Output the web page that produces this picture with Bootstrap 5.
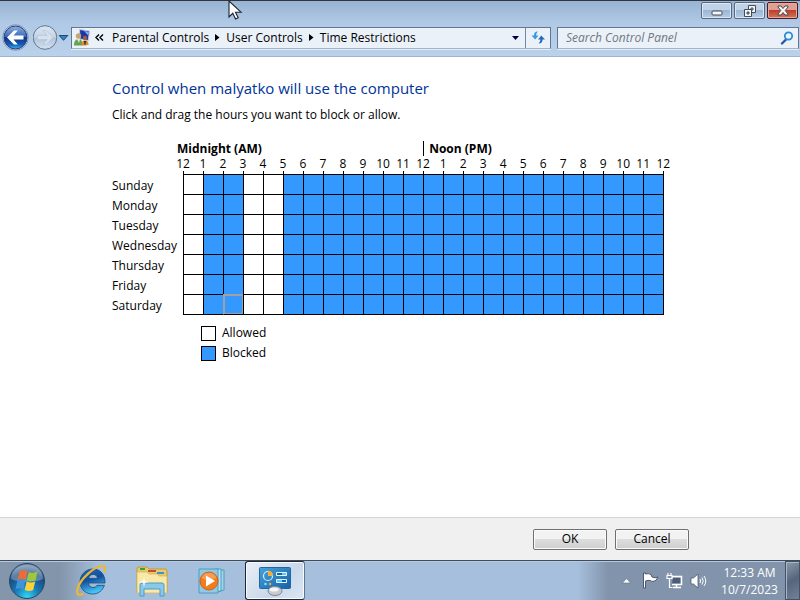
<!DOCTYPE html>
<html lang="en">
<head>
<meta charset="utf-8">
<meta name="viewport" content="width=device-width, initial-scale=1">
<title>Time Restrictions</title>
<link href="https://cdn.jsdelivr.net/npm/bootstrap@5.3.0/dist/css/bootstrap.min.css" rel="stylesheet">
<style>
  body { font-family: "Open Sans", "Noto Sans", sans-serif; font-size: 12px; line-height: 16px; color: #000; background: #fff; }
  button { font: inherit; color: inherit; }
  svg { display: block; flex: none; }

  .window-head { border-top: 1px solid #35353b; border-bottom: 1px solid #a0b5cc; background: linear-gradient(#98b3d3, #b0c9e6 40%, #b9d1ea); height: 57px; }
  .caption { height: 23px; padding: 1px 2px 0 0; gap: 2px; }
  .caption-btn { width: 31px; height: 17px; padding: 0; border: 1px solid #56687f; border-radius: 2px; box-shadow: inset 0 0 0 1px #dbe7f4; background: linear-gradient(#bfd2e7 45%, #9db7d3 50%, #b5cce5); }
  .caption-close { border-color: #4b1a20; box-shadow: inset 0 0 0 1px #e6a99e; background: linear-gradient(#dfa093 45%, #bd3f28 50%, #cf7560); }
  .nav-history { width: 71px; padding-left: 2px; }
  .round-btn, .plain-btn { border: 0; padding: 0; background: none; }
  .address { height: 22px; border: 1px solid #63788f; border-bottom-color: #a3b4c8; background: #eaf1f9; box-shadow: 0 1px 0 #e2edf8; margin-right: 6px; padding-left: 1px; }
  .crumb { color: #000; text-decoration: none; white-space: nowrap; }
  .crumb-arrow { margin: 0 6px; }
  .refresh { width: 25px; height: 20px; border-left: 1px solid #7488a0; }
  .drop { margin: 0 6px 0 auto; }
  .search { width: 242px; height: 22px; border: 1px solid #63788f; border-bottom-color: #a3b4c8; background: #eaf1f9; box-shadow: 0 1px 0 #e2edf8; margin-right: 1px; padding: 0 4px 0 8px; }
  .search input { border: 0; outline: 0; padding: 0; background: none; font-style: italic; min-width: 0; }
  .search input::placeholder { color: #72777d; opacity: 1; }
  .pointer { position: absolute; left: 228px; top: 0; pointer-events: none; }

  .content { padding: 20px 112px 0; }
  h1 { font-size: 15px; line-height: 22px; font-weight: 400; color: #039; margin: 0 0 8px; }
  .intro { margin: 0 0 18px; }

  .hours { table-layout: fixed; width: 561px; border-collapse: separate; border-spacing: 0; }
  .hours th, .hours td { padding: 0; line-height: 15px; white-space: nowrap; font-weight: 400; }
  .hours .label-col { width: 61px; }
  .hours .half-col { width: 10px; }
  .hours .half-day th { height: 15px; font-weight: 700; padding-left: 4px; }
  .hours .half-day .noon { border-left: 1px solid #000; padding-left: 5px; }
  .hours .hour-names th { height: 15px; text-align: center; }
  .hours .ticks td { height: 3px; line-height: 0; }
  .hours .ticks .tick { border-left: 1px solid #000; }
  .hours tbody th { height: 20px; padding-top: 4px; vertical-align: top; }
  .hours .slot { border-left: 1px solid #000; border-top: 1px solid #000; }
  .hours .edge { border-left: 1px solid #000; }
  .hours .blocked, .swatch.blocked { background: #39f; }
  .hours .focused { box-shadow: inset 1px 1px 0 #a0a0a0, inset -1px -1px 0 #a0a0a0; border-color: #a0a0a0; }
  .hours tbody tr:last-child > * { height: 21px; }
  .hours tbody tr:last-child .slot { border-bottom: 1px solid #000; }
  .legend { margin: 10px 0 0 89px; gap: 4px; }
  .legend-item { gap: 6px; }
  .swatch { width: 15px; height: 15px; border: 1px solid #000; }

  .actions { height: 43px; background: #f0f0f0; border-top: 1px solid #d5d5d5; padding: 0 111px; gap: 8px; }
  .dialog-btn { width: 74px; height: 21px; padding: 0; border: 1px solid #707070; border-radius: 2px; box-shadow: inset 0 0 0 1px #fbfbfb; background: linear-gradient(#f2f2f2 50%, #ddd 50%, #cfcfcf); line-height: 18px; }

  .taskbar { height: 40px; border-top: 1px solid #3f4c5e; box-shadow: inset 0 1px 0 #b5c9df; background: linear-gradient(90deg, #8496ac 0, #8395ab 60px, #a6bfdd 100px, #a6bfdd calc(100% - 222px), #8294ab calc(100% - 192px)); }
  .task-btn { width: 61px; height: 39px; border: 0; padding: 0; background: none; }
  .start-btn { width: 60px; padding-left: 8px; }
  .task-active { width: 60px; margin-left: 2px; border: 1px solid #1d2735; border-right-color: #64758a; border-radius: 3px; box-shadow: inset 0 0 0 1px #f8fbfe; background: linear-gradient(135deg, #e9eff7, #c9d8ea 60%, #dde7f3); }
  .tray { color: #fff; gap: 7px; }
  .clock { text-align: center; line-height: 17px; width: 71px; }
  .peek { width: 15px; height: 39px; border: 1px solid #445266; box-shadow: inset 1px 1px 0 #a9b6c6; padding: 0; background: linear-gradient(150deg, #8c9aab, #56657a 50%, #71819a); }
</style>
<script src="https://cdn.jsdelivr.net/npm/bootstrap@5.3.0/dist/js/bootstrap.bundle.min.js"></script>
</head>
<body class="d-flex flex-column min-vh-100">

<header class="window-head d-flex flex-column">
  <div class="caption d-flex justify-content-end align-items-start">
    <button type="button" class="caption-btn d-flex justify-content-center align-items-center" aria-label="Minimize">
      <svg width="12" height="12" viewBox="0 0 12 12"><rect x="1" y="6" width="10" height="4" rx="1" fill="#f5f5f5" stroke="#434b58"/></svg>
    </button>
    <button type="button" class="caption-btn d-flex justify-content-center align-items-center" aria-label="Restore">
      <svg width="14" height="12" viewBox="0 0 14 12" fill="#f5f5f5" stroke="#434b58"><path fill-rule="evenodd" d="M5.500.5h7v7h-7zM8 3h2v2H8z"/><path fill-rule="evenodd" d="M1.500 4.500h7v7h-7zM4 7h2v2H4z"/></svg>
    </button>
    <button type="button" class="caption-btn caption-close d-flex justify-content-center align-items-center" aria-label="Close">
      <svg width="12" height="11" viewBox="0 0 12 11"><path d="M1 1h3l2 2.500L8 1h3v1L8.200 5.500 11 9v1H8L6 7.500 4 10H1V9l2.800-3.500L1 2z" fill="#f7f7f7" stroke="#4d4350"/></svg>
    </button>
  </div>
  <nav class="d-flex align-items-center" aria-label="Address">
    <div class="nav-history d-flex align-items-center">
      <button type="button" class="round-btn" aria-label="Back">
        <svg width="27" height="27" viewBox="0 0 27 27">
          <defs><linearGradient id="back" x2="0" y2="1"><stop offset="0" stop-color="#8fb0e0"/><stop offset=".48" stop-color="#3968b8"/><stop offset=".5" stop-color="#0b3284"/><stop offset=".8" stop-color="#1659b8"/><stop offset="1" stop-color="#39b9f0"/></linearGradient></defs>
          <circle cx="13.500" cy="13.500" r="12.800" fill="#dce8f5" stroke="#7e93ae"/><circle cx="13.500" cy="13.500" r="11.500" fill="url(#back)" stroke="#20407c"/>
          <path d="M5 13.500 12 6.500h3.800l-4.300 4.900h10v4.200h-10l4.300 4.900H12z" fill="#fff"/>
        </svg>
      </button>
      <button type="button" class="round-btn ms-1" aria-label="Forward">
        <svg width="25" height="27" viewBox="1 0 25 27">
          <defs><linearGradient id="fwd" x2="0" y2="1"><stop offset="0" stop-color="#d9e5f2"/><stop offset=".48" stop-color="#c6d5e6"/><stop offset=".52" stop-color="#b1c4da"/><stop offset="1" stop-color="#d5e2f0"/></linearGradient></defs>
          <circle cx="13" cy="13.500" r="11.800" fill="url(#fwd)" stroke="#66778c"/>
          <path d="M21 13.500 14 6.500h-3l4.200 4.900H5.500v4.200h9.700L11 20.500h3z" fill="#d6e2ef" stroke="#b4c4d8" stroke-width=".7"/>
        </svg>
      </button>
      <button type="button" class="plain-btn" aria-label="Recent pages">
        <svg width="11" height="6" viewBox="0 0 11 6"><path d="M1.200.5h8.600L5.500 5.300z" fill="#2c87bd" stroke="#24456f"/></svg>
      </button>
    </div>
    <div class="address flex-grow-1 d-flex align-items-center">
      <svg width="18" height="18" viewBox="0 0 18 18">
        <path d="M6.500.5 16.500 2l-1.200 9.500L7 10z" fill="#1a35a8" stroke="#c3cbdc"/><path d="M11 2l5 .8-.6 4z" fill="#86a6ee"/>
        <circle cx="5.500" cy="7" r="2.700" fill="#c7a573"/><path d="M1 16.500C1 12 3 10 5.500 10s4 2 4 6.500z" fill="#63a352"/><path d="M4 10h3l-1 4z" fill="#e5f1dc"/>
        <circle cx="12" cy="9" r="2.200" fill="#9c6138"/><path d="M8.500 16.500c0-4 1.500-5 3.500-5s3.500 1 3.500 4.500z" fill="#e08a2c"/><path d="M10.500 12h3L12 17z" fill="#4e3a2c"/>
      </svg>
      <svg class="ms-1" width="9" height="7" viewBox="0 0 9 7"><path d="M4 .5 1 3.500l3 3M8 .5 5 3.500l3 3" fill="none" stroke="#000" stroke-width="1.400"/></svg>
      <a class="crumb ms-2" href="#">Parental Controls</a>
      <svg class="crumb-arrow" width="5" height="7" viewBox="0 0 5 7"><path d="M0 0l4.500 3.500L0 7z"/></svg>
      <a class="crumb" href="#">User Controls</a>
      <svg class="crumb-arrow" width="5" height="7" viewBox="0 0 5 7"><path d="M0 0l4.500 3.500L0 7z"/></svg>
      <a class="crumb" href="#" aria-current="page">Time Restrictions</a>
      <button type="button" class="plain-btn drop" aria-label="Previous locations">
        <svg width="7" height="4" viewBox="0 0 7 4"><path d="M0 0h7L3.500 4z" fill="#00004a"/></svg>
      </button>
      <button type="button" class="plain-btn refresh d-flex align-items-center justify-content-center" aria-label="Refresh">
        <svg width="14" height="13" viewBox="0 0 14 13"><path d="M7 .5C4 .5 3 2 3 4.500H.5L4.200 8.500 7.500 4.500H5.200C5.200 3 5.500 2 7 .5z" fill="#359bdb"/><path d="M7.500 12.500c3 0 4-1.500 4-4H14l-3.700-4L7 8.500h2.300c0 1.500-.3 2.500-1.800 4z" fill="#276bc0"/></svg>
      </button>
    </div>
    <div class="search d-flex align-items-center">
      <input class="flex-grow-1" type="search" placeholder="Search Control Panel" aria-label="Search Control Panel">
      <button type="button" class="plain-btn" aria-label="Search">
        <svg width="14" height="14" viewBox="0 0 14 14"><path d="M6 8.500 2 12.500" stroke="#2857a4" stroke-width="2.400" stroke-linecap="round"/><circle cx="8.500" cy="5" r="3.700" fill="#e9f4fc" stroke="#318bd0" stroke-width="1.800"/></svg>
      </button>
    </div>
  </nav>
</header>

<main class="content flex-grow-1">
  <h1>Control when malyatko will use the computer</h1>
  <p class="intro">Click and drag the hours you want to block or allow.</p>
  <table class="hours">
    <colgroup><col class="label-col"><col class="half-col" span="50"></colgroup>
    <thead>
      <tr class="half-day"><td></td><th colspan="25" scope="colgroup">Midnight (AM)</th><th colspan="25" scope="colgroup" class="noon">Noon (PM)</th></tr>
      <tr class="hour-names" id="hourNames"><td></td></tr>
      <tr class="ticks" id="ticks"><td colspan="2"></td></tr>
    </thead>
    <tbody id="days"></tbody>
  </table>
  <div class="legend d-flex flex-column">
    <div class="legend-item d-flex align-items-center"><span class="swatch"></span><span>Allowed</span></div>
    <div class="legend-item d-flex align-items-center"><span class="swatch blocked"></span><span>Blocked</span></div>
  </div>
</main>

<div class="actions d-flex justify-content-end align-items-center">
  <button type="button" class="dialog-btn">OK</button>
  <button type="button" class="dialog-btn">Cancel</button>
</div>

<footer class="taskbar d-flex align-items-center">
  <button type="button" class="task-btn start-btn" aria-label="Start">
    <svg width="38" height="38" viewBox="0 0 38 38">
      <defs><radialGradient id="orb" cx=".5" cy=".95" r=".9"><stop offset="0" stop-color="#35d5f5"/><stop offset=".4" stop-color="#1778b4"/><stop offset=".75" stop-color="#1d4b80"/><stop offset="1" stop-color="#6c8bab"/></radialGradient></defs>
      <circle cx="19" cy="19" r="17.500" fill="url(#orb)" stroke="#254867"/>
      <path d="M3 17C4 7 11 3 19 3s15 4 16 14c-8 4-24 4-32 0z" fill="#fff" opacity=".28"/>
      <path d="M11.500 9.500q4-2.500 8-.2l-1.900 8.300q-4-2-8 .2z" fill="#ee6b35"/><path d="M20.800 10q4 2 8.700-.4l-2 8.600q-4.300 2.200-8.600-.1z" fill="#9cc93c"/>
      <path d="M9.300 19.200q4-2 8-.2l-1.900 8.300q-4-2-8 .2z" fill="#3f93dc"/><path d="M18.600 19.600q4.300 2 8.600 0l-2 8.500q-4.200 2-8.500-.2z" fill="#fcd23c"/>
    </svg>
  </button>
  <button type="button" class="task-btn d-flex justify-content-center align-items-center" aria-label="Internet Explorer">
    <svg width="34" height="34" viewBox="0 0 34 34">
      <defs><linearGradient id="ie" x2=".3" y2="1"><stop offset="0" stop-color="#1f69bb"/><stop offset=".5" stop-color="#164f9c"/><stop offset="1" stop-color="#43c5f4"/></linearGradient></defs>
      <path d="M31 19H14.500c.2 3 2 4.500 4.500 4.500 2 0 3.200-.8 4-2.200h7.400C28.500 26.500 24.500 30 18.800 30 11.500 30 6 25 6 18S11.500 5 19 5s12.500 6 12 14zM14.700 14.400h8.800c-.3-2.500-2-4-4.400-4s-4 1.500-4.400 4z" fill="url(#ie)" stroke="#174a86" stroke-width=".8"/>
      <path d="M30.500 7.500c1.500-4 .5-6-3-5.500C20 3 6 15 3.500 25c-1.200 5 .5 7 5 5" fill="none" stroke="#ecb92c" stroke-width="2.200" stroke-linecap="round"/>
    </svg>
  </button>
  <button type="button" class="task-btn d-flex justify-content-center align-items-center" aria-label="Windows Explorer">
    <svg width="34" height="32" viewBox="0 0 34 32">
      <path d="M2 4q0-2 2-2h8l2 2h16q2 0 2 2v21H2z" fill="#eacb68" stroke="#c39b3c"/>
      <path d="M5 3h5v2H5z" fill="#2fa14a"/><path d="M13 5h8v2h-8z" fill="#c94b32"/><path d="M22 7h7v2h-7z" fill="#3a92cf"/>
      <path d="M2 7h10l2 2h8l2 2h8v17H2z" fill="#f8e9a9" stroke="#d2b25c" stroke-width=".7"/>
      <path d="M5 31V20q0-2 2-2h20q2 0 2 2v11h-4v-7H9v7z" fill="#8bc9ea" stroke="#4f99c8"/><path d="M9 12l1 4 4 1-4 1-1 4-1-4-4-1 4-1z" fill="#fff" opacity=".85"/>
    </svg>
  </button>
  <button type="button" class="task-btn d-flex justify-content-center align-items-center" aria-label="Windows Media Player">
    <svg width="30" height="28" viewBox="0 0 30 28">
      <path d="M20 3h6v20l-6 2z" fill="#9fd4ea" stroke="#4c9cc0"/><path d="M17 2h6v22l-6 1z" fill="#b9e2f2" stroke="#4c9cc0"/><path d="M1 2h19v24H1z" fill="#8ecae5" stroke="#4c9cc0"/>
      <circle cx="11" cy="14" r="9" fill="#f07c1d" stroke="#d65f12"/><path d="M3.500 11a8 8 0 0 1 15 0q-8 4-15 0z" fill="#fff" opacity=".25"/><path d="M8 8.500l9 5.500-9 5.500z" fill="#fff"/>
    </svg>
  </button>
  <button type="button" class="task-btn task-active d-flex justify-content-center align-items-center" aria-label="Control Panel">
    <svg width="34" height="30" viewBox="0 0 34 30">
      <defs><linearGradient id="cpl" x2="1" y2="1"><stop offset="0" stop-color="#48a3dc"/><stop offset="1" stop-color="#1561a8"/></linearGradient></defs>
      <rect x="1.500" y="1.500" width="31" height="21" rx="1" fill="url(#cpl)" stroke="#23659c"/>
      <circle cx="10" cy="10" r="4.500" fill="none" stroke="#d8effb" stroke-width="1.200"/><path d="M10 10V4.500a5.500 5.500 0 0 1 5 5.500z" fill="#f3ad39"/>
      <path d="M18.500 6.500h10v3h-10zM18.500 13.500h10v3h-10z" fill="#63c8f5" stroke="#e4f5fd"/><path d="M19 7h5v2h-5zM24 14h4v2h-4z" fill="#1467ad"/>
      <circle cx="7.500" cy="18" r="1.300" fill="#7fe0f8"/><circle cx="12" cy="18" r="1.300" fill="#f5a13a"/>
      <ellipse cx="17" cy="25" rx="7" ry="4.500" fill="#c8ccd0" stroke="#7d858c"/><ellipse cx="16" cy="23.500" rx="4.500" ry="2" fill="#f4f5f6"/>
    </svg>
  </button>
  <div class="tray ms-auto d-flex align-items-center">
    <button type="button" class="plain-btn me-1" aria-label="Show hidden icons"><svg width="9" height="6" viewBox="0 0 9 6"><path d="M4.500.5 8.500 5h-8z" fill="#fff" stroke="#5e6e83" stroke-width=".6"/></svg></button>
    <button type="button" class="plain-btn" aria-label="Action Center"><svg width="17" height="17" viewBox="0 0 17 17"><path d="M1.500 1h2v1q3-1 5.500.5L10 5q3 1.500 6 0-1.500 4.500-5 4.500-1.500 0-2.500-1-2.500-.5-5 .5v7h-2z" fill="#fff" stroke="#4b5a6d"/></svg></button>
    <button type="button" class="plain-btn" aria-label="Network"><svg width="17" height="17" viewBox="0 0 17 17"><path d="M7 6h7.500v5.500H6z" fill="#4d5e74"/><path d="M6 4.500h9.500v8H6M10.500 13v2M7 15.500h8" fill="none" stroke="#fff" stroke-width="1.500"/><path d="M2 1v3M5 1v3M1 3.500h5v3H1zM3.500 7v8.500h3" fill="none" stroke="#fff" stroke-width="1.200"/></svg></button>
    <button type="button" class="plain-btn" aria-label="Volume"><svg width="17" height="16" viewBox="0 0 17 16"><path d="M1 5h2.500L8 1v14l-4.500-4H1z" fill="#fff" stroke="#4b5a6d" stroke-width=".8"/><path d="M10 6q1.200 2 0 4M12 4.500q2.500 3.500 0 7M14 3q3.500 5 0 10" fill="none" stroke="#fff"/></svg></button>
    <div class="clock">12:33 AM<br>10/7/2023</div>
  </div>
  <button type="button" class="peek" aria-label="Show desktop"></button>
</footer>

<svg class="pointer" width="16" height="20" viewBox="0 0 16 20"><path d="M1 1v16l3.800-3.700 2.700 5.700 2.700-1.200L7.500 12.200H13z" fill="#fff" stroke="#1c2330" stroke-width="1.100"/></svg>

<script>
  const dayNames = ["Sunday", "Monday", "Tuesday", "Wednesday", "Thursday", "Friday", "Saturday"];
  const allowedHours = [0, 3, 4];
  for (let h = 0; h <= 24; h++) {
    document.getElementById("hourNames").insertAdjacentHTML("beforeend", `<th colspan="2">${h % 12 || 12}</th>`);
    document.getElementById("ticks").insertAdjacentHTML("beforeend", `<td class="tick" colspan="${h < 24 ? 2 : 1}"></td>`);
  }
  document.getElementById("days").innerHTML = dayNames.map((day, d) => {
    let cells = "";
    for (let h = 0; h < 24; h++) {
      const blocked = allowedHours.includes(h) ? "" : " blocked";
      const focused = d === 6 && h === 2 ? " focused" : "";
      cells += `<td colspan="2" class="slot${blocked}${focused}"></td>`;
    }
    return `<tr><th colspan="2" scope="row">${day}</th>${cells}<td class="edge"></td></tr>`;
  }).join("");
</script>
</body>
</html>
